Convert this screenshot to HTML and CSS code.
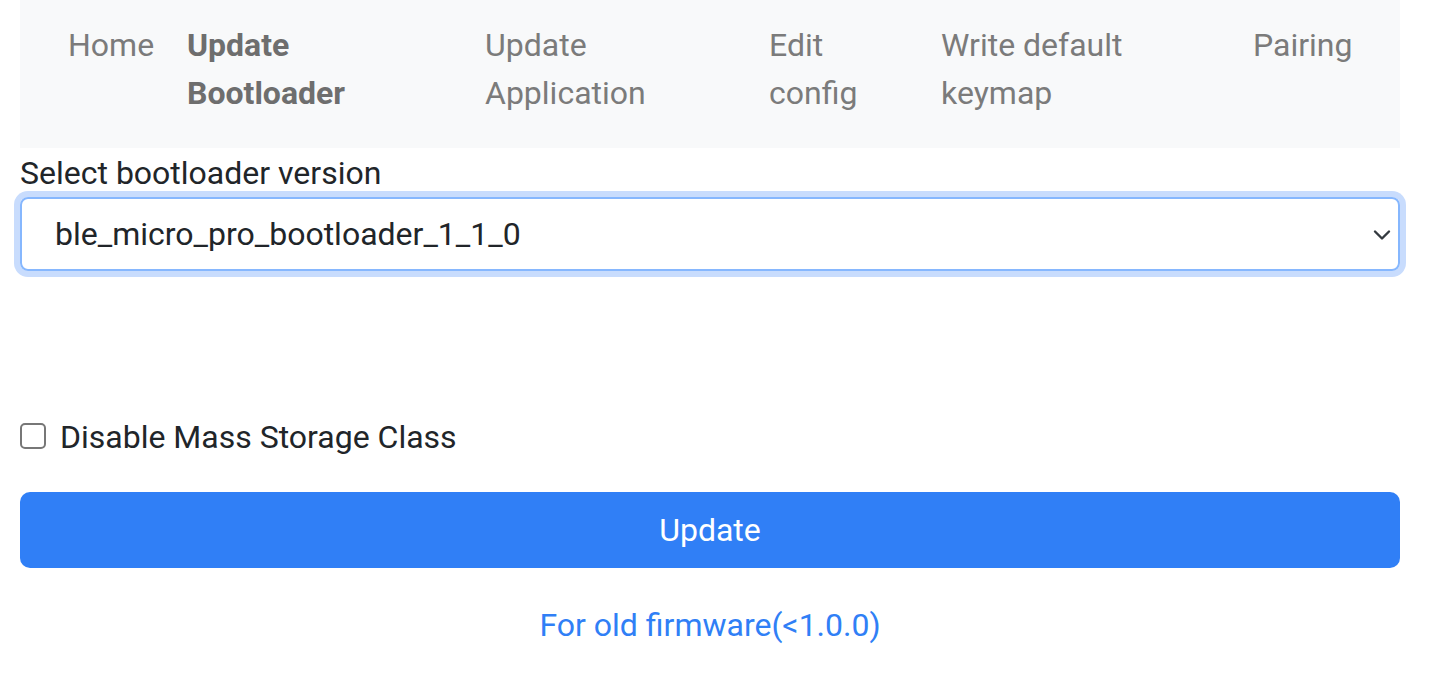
FILE: index.html
```html
<!DOCTYPE html>
<html lang="en">
<head>
<meta charset="utf-8">
<title>BLE Micro Pro Web Configurator</title>
<link rel="stylesheet" href="styles.css">
</head>
<body>
<div class="container">
  <nav class="navbar">
    <a class="nav-link" href="#">Home</a>
    <a class="nav-link active" href="#">Update Bootloader</a>
    <a class="nav-link" href="#">Update Application</a>
    <a class="nav-link" href="#">Edit config</a>
    <a class="nav-link" href="#">Write default keymap</a>
    <a class="nav-link" href="#">Pairing</a>
  </nav>
  <label class="form-label" for="ver">Select bootloader version</label>
  <div class="select">
    <span class="select-value">ble_micro_pro_bootloader_1_1_0</span>
    <svg class="chevron" width="18" height="12" viewBox="0 0 18 12"><path d="M2 2.5 L9 9.5 L16 2.5" fill="none" stroke="#343a40" stroke-width="2.4" stroke-linecap="round" stroke-linejoin="round"/></svg>
  </div>
  <div class="spacer"></div>
  <div class="form-check">
    <span class="check-box"></span>
    <span class="check-label">Disable Mass Storage Class</span>
  </div>
  <button class="btn-primary" type="button">Update</button>
  <div class="old-link"><a href="#">For old firmware(&lt;1.0.0)</a></div>
</div>
</body>
</html>
```
FILE: styles.css
```css
* { box-sizing: border-box; }
html, body { margin: 0; padding: 0; background: #fff; }
body {
  font-family: Roboto, "Liberation Sans", sans-serif;
  font-size: 32px;
  line-height: 48px;
  color: #212529;
}
.container {
  margin-left: 20px;
  width: 1380px;
}
.navbar {
  background: #f8f9fa;
  height: 148px;
  padding: 21px 32px 0 32px;
  display: grid;
  grid-template-columns: 119px 298px 284px 172px 312px 131px;
  align-items: start;
}
.nav-link {
  padding: 0 16px;
  color: #7b7b7b;
  text-decoration: none;
}
.nav-link.active {
  font-weight: 700;
  color: #6e6e6e;
}
.form-label {
  display: block;
  height: 48px;
  padding-top: 1px;
}
.select {
  height: 74px;
  border: 2px solid #86b7fe;
  border-radius: 8px;
  box-shadow: 0 0 0 6px #c8dcfd;
  display: flex;
  align-items: center;
  justify-content: space-between;
  padding: 0 7px 0 33px;
  margin-top: 1px;
}
.select-value { color: #212529; }
.chevron { display: block; margin-top: 2px; }
.spacer { height: 142px; }
.form-check {
  display: flex;
  align-items: center;
  height: 48px;
}
.check-box {
  width: 26px;
  height: 26px;
  border: 2px solid #777;
  border-radius: 5px;
  margin-right: 14px;
  margin-top: -2px;
}
.btn-primary {
  display: block;
  width: 100%;
  height: 76px;
  margin-top: 31px;
  border: 0;
  border-radius: 10px;
  background: #307ff6;
  color: #fff;
  font: inherit;
  padding: 0;
  line-height: 76px;
}
.old-link {
  text-align: center;
  margin-top: 33px;
}
.old-link a {
  color: #307ff6;
  text-decoration: none;
}
```
